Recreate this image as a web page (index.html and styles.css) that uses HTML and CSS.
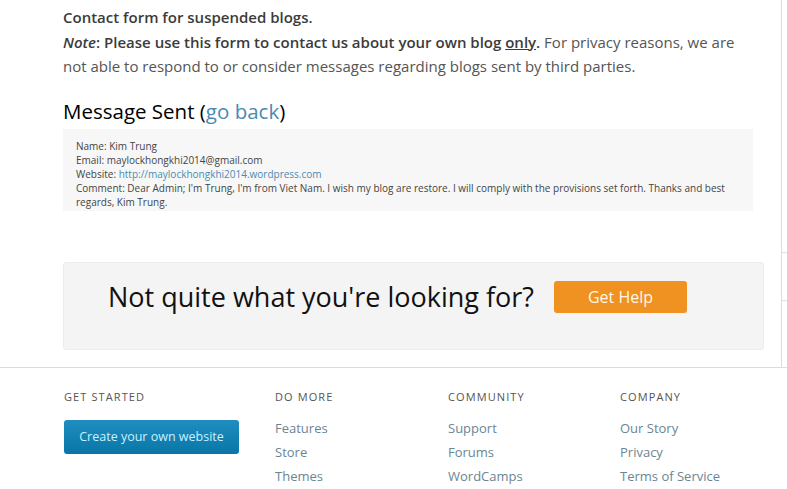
FILE: index.html
```html
<!DOCTYPE html>
<html>
<head>
<meta charset="utf-8">
<link rel="stylesheet" href="styles.css">
</head>
<body>
<div class="page">
  <main class="main">
    <div class="intro">
      <p class="lead"><strong>Contact form for suspended blogs.</strong><br>
      <strong><em>Note</em>: Please use this form to contact us about your own blog <u>only</u>.</strong> For privacy reasons, we are not able to respond to or consider messages regarding blogs sent by third parties.</p>
    </div>
    <h2 class="sent">Message Sent (<a href="#" class="link">go back</a>)</h2>
    <div class="msg">
      Name: Kim Trung<br>
      Email: maylockhongkhi2014@gmail.com<br>
      Website: <a href="#" class="link">http://maylockhongkhi2014.wordpress.com</a><br>
      Comment: Dear Admin; I'm Trung, I'm from Viet Nam. I wish my blog are restore. I will comply with the provisions set forth. Thanks and best regards, Kim Trung.
    </div>
    <div class="cta">
      <span class="cta-text">Not quite what you're looking for?</span>
      <a href="#" class="btn-help">Get Help</a>
    </div>
  </main>
  <div class="rail">
    <span class="tick t1"></span>
    <span class="tick t2"></span>
  </div>
</div>
<footer class="footer">
  <div class="col">
    <h3>Get Started</h3>
    <a href="#" class="btn-create">Create your own website</a>
  </div>
  <div class="col">
    <h3>Do More</h3>
    <a href="#">Features</a>
    <a href="#">Store</a>
    <a href="#">Themes</a>
  </div>
  <div class="col">
    <h3>Community</h3>
    <a href="#">Support</a>
    <a href="#">Forums</a>
    <a href="#">WordCamps</a>
  </div>
  <div class="col">
    <h3>Company</h3>
    <a href="#">Our Story</a>
    <a href="#">Privacy</a>
    <a href="#">Terms of Service</a>
  </div>
</footer>
</body>
</html>
```
FILE: styles.css
```css
html, body {
  margin: 0;
  padding: 0;
  background: #fff;
  font-family: "Open Sans", "Liberation Sans", sans-serif;
  overflow: hidden;
}
.page {
  display: flex;
  height: 367px;
}
.main {
  width: 718px;
  padding-left: 63px;
  border-right: 1px solid #dcdcdc;
}
.rail {
  position: relative;
  flex: 1;
}
.tick {
  position: absolute;
  left: 0;
  width: 6px;
  height: 1px;
  background: #e0e0e0;
}
.t1 { top: 252px; }
.t2 { top: 300px; }
.intro {
  padding-top: 5px;
}
.lead {
  margin: 0;
  max-width: 690px;
  font-size: 15px;
  line-height: 24.5px;
  color: #555;
}
.lead strong {
  color: #3b3b3b;
  font-weight: 600;
}
.link {
  color: #4a8bb2;
  text-decoration: none;
}
.sent {
  margin: 17px 0 0;
  font-size: 20.5px;
  font-weight: 400;
  line-height: 30px;
  color: #000;
}
.msg {
  margin-top: 3px;
  width: 664px;
  padding: 10px 13px 2px;
  background: #f7f7f7;
  font-size: 10px;
  line-height: 14px;
  color: #444;
  min-height: 69px;
}
.cta {
  margin-top: 51px;
  width: 701px;
  height: 88px;
  box-sizing: border-box;
  background: #f4f4f4;
  border: 1px solid #ececec;
  border-radius: 3px;
  display: flex;
  align-items: center;
  padding-left: 44px;
  padding-bottom: 18px;
  gap: 20px;
}
.cta-text {
  font-size: 27px;
  color: #111;
}
.btn-help {
  display: inline-block;
  width: 133px;
  height: 32px;
  line-height: 32px;
  text-align: center;
  background: #ef9221;
  border-radius: 3px;
  color: #fff8e6;
  font-size: 16px;
  text-decoration: none;
}
.footer {
  border-top: 1px solid #dcdcdc;
  display: grid;
  grid-template-columns: 211px 173px 172px 1fr;
  padding: 20px 0 0 64px;
}
.col h3 {
  margin: 0 0 10px;
  font-size: 11px;
  font-weight: 400;
  letter-spacing: 1.1px;
  text-transform: uppercase;
  color: #555;
  line-height: 18px;
}
.col a {
  display: block;
  font-size: 13px;
  line-height: 24px;
  color: #6b8594;
  text-decoration: none;
}
.btn-create {
  width: 175px;
  height: 34px;
  line-height: 34px !important;
  text-align: center;
  background: linear-gradient(#1f8dbf, #0a76a8);
  border-radius: 3px;
  color: #c9f1ff !important;
  font-size: 12.5px !important;
  margin-top: 14px;
}
```
